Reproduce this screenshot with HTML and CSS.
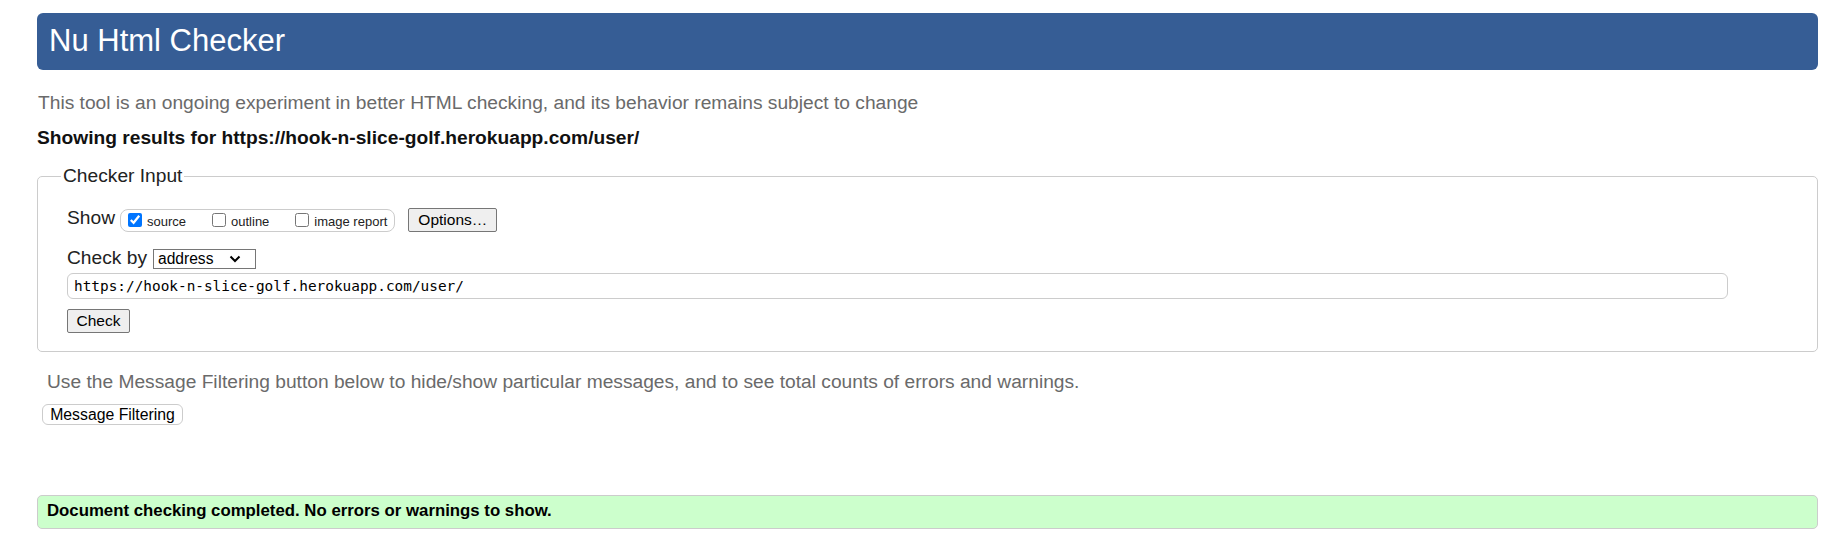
FILE: index.html
```html
<!DOCTYPE html>
<html lang="en">
<head>
<meta charset="utf-8">
<title>Nu Html Checker</title>
<link rel="stylesheet" href="styles.css">
</head>
<body>
<h1 class="title">Nu Html Checker</h1>
<p class="intro">This tool is an ongoing experiment in better HTML checking, and its behavior remains subject to change</p>
<p class="results">Showing results for https://hook-n-slice-golf.herokuapp.com/user/</p>
<form class="form">
  <fieldset class="checker">
    <legend class="legend">Checker Input</legend>
    <div class="row show-row">
      <span class="label">Show</span>
      <span class="group">
        <label class="opt"><input type="checkbox" class="cb" checked>source</label>
        <label class="opt"><input type="checkbox" class="cb">outline</label>
        <label class="opt"><input type="checkbox" class="cb">image report</label>
      </span>
      <button type="button" class="btn options">Options…</button>
    </div>
    <div class="row by-row">
      <span class="label">Check by</span>
      <span class="select">address<svg class="chev" width="12" height="8" viewBox="0 0 12 8"><path d="M1.5 1.5 L6 6 L10.5 1.5" fill="none" stroke="#000" stroke-width="2"/></svg></span>
    </div>
    <div class="url">https://hook-n-slice-golf.herokuapp.com/user/</div>
    <button type="button" class="btn check">Check</button>
  </fieldset>
</form>
<p class="filter-note">Use the Message Filtering button below to hide/show particular messages, and to see total counts of errors and warnings.</p>
<button type="button" class="filter-btn">Message Filtering</button>
<div class="success">Document checking completed. No errors or warnings to show.</div>
</body>
</html>
```
FILE: styles.css
```css
html, body {
  margin: 0;
  background: #fff;
}
body {
  padding: 13px 30px 0 37px;
  font-family: "Liberation Sans", Arial, sans-serif;
  color: #222;
}
.title {
  margin: 0;
  height: 57px;
  box-sizing: border-box;
  padding: 10px 12px 12px;
  background: #365d95;
  color: #fff;
  font-size: 31px;
  font-weight: normal;
  line-height: 35px;
  border-radius: 6px;
}
.intro {
  margin: 22px 0 0 1px;
  font-size: 19.2px;
  line-height: 22px;
  color: #6a6a6a;
}
.results {
  margin: 13px 0 0 0;
  font-size: 19.2px;
  line-height: 22px;
  font-weight: bold;
  color: #111;
}
.form {
  margin: 0;
}
.checker {
  margin: 16px 0 0 0;
  padding: 21px 29px 18px 29px;
  border: 1px solid #ccc;
  border-radius: 5px;
  min-width: 0;
}
.legend {
  padding: 0 2px;
  margin-left: -6px;
  font-size: 19.2px;
  line-height: 22px;
  color: #222;
}
.row {
  display: flex;
  align-items: center;
}
.label {
  font-size: 19.2px;
  align-self: flex-start;
}
.show-row {
  height: 24px;
}
.show-row .label {
  line-height: 20px;
}
.group {
  display: flex;
  align-items: center;
  height: 21px;
  margin-left: 5px;
  padding: 0 7px 0 7px;
  border: 1px solid #ccc;
  border-radius: 8px;
}
.opt {
  display: flex;
  align-items: center;
  font-size: 13px;
  margin-right: 26px;
  position: relative;
  top: 1px;
}
.opt:last-child {
  margin-right: 0;
}
.cb {
  width: 14px;
  height: 14px;
  margin: 0 5px 3px 0;
  accent-color: #0075ff;
}
.btn {
  font-family: "Liberation Sans", Arial, sans-serif;
  font-size: 15.5px;
  color: #000;
  background: #efefef;
  border: 1px solid #767676;
  border-radius: 2px;
  padding: 0 8px;
  box-sizing: border-box;
}
.options {
  margin-left: 13px;
  height: 24px;
  width: 89px;
}
.by-row {
  margin-top: 17px;
  height: 20px;
}
.by-row .label {
  line-height: 17px;
}
.select {
  display: flex;
  align-items: center;
  justify-content: space-between;
  box-sizing: border-box;
  width: 103px;
  height: 20px;
  margin-left: 6px;
  padding: 0 14px 0 4px;
  border: 1px solid #767676;
  font-size: 15.6px;
  color: #000;
  background: #fff;
}
.url {
  margin-top: 4px;
  margin-right: 60px;
  height: 26px;
  box-sizing: border-box;
  border: 1px solid #ccc;
  border-radius: 6px;
  padding: 0 6px;
  font-family: "DejaVu Sans Mono", "Liberation Mono", monospace;
  font-size: 14.4px;
  line-height: 24px;
  color: #000;
}
.check {
  display: block;
  margin-top: 10px;
  width: 63px;
  height: 24px;
}
.filter-note {
  margin: 19px 0 0 10px;
  font-size: 19.2px;
  line-height: 22px;
  color: #6a6a6a;
}
.filter-btn {
  display: block;
  margin: 11px 0 0 5px;
  height: 21px;
  width: 141px;
  box-sizing: border-box;
  padding: 0;
  font-family: "Liberation Sans", Arial, sans-serif;
  font-size: 15.8px;
  color: #000;
  background: #fff;
  border: 1px solid #ccc;
  border-radius: 6px;
}
.success {
  margin-top: 70px;
  height: 34px;
  box-sizing: border-box;
  padding: 0 9px;
  border: 1px solid #ccc;
  border-radius: 5px;
  background: #ccffcc;
  font-size: 16.8px;
  line-height: 30px;
  font-weight: bold;
  color: #000;
}
```
